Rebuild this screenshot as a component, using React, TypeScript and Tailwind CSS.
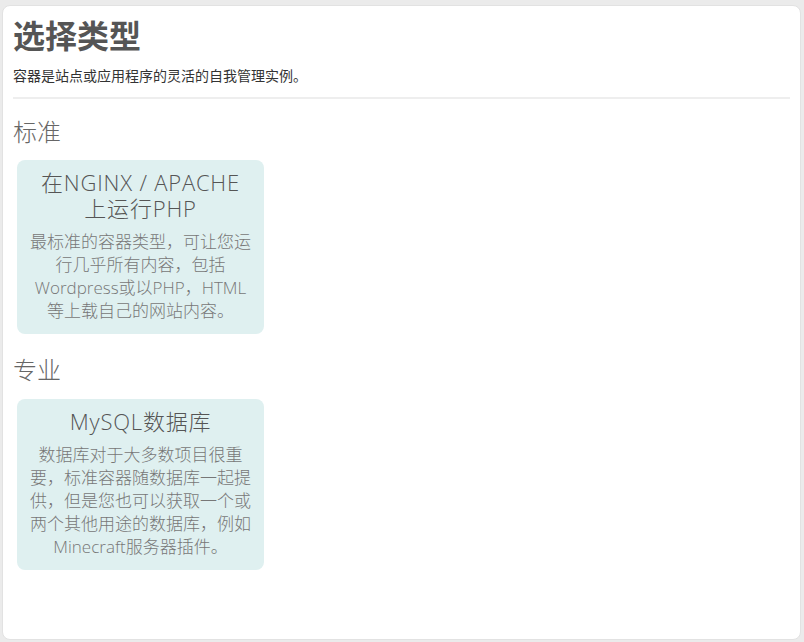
const cards = {
  standard: {
    title: ["在NGINX / APACHE", "上运行PHP"],
    desc: ["最标准的容器类型，可让您运", "行几乎所有内容，包括", "Wordpress或以PHP，HTML", "等上载自己的网站内容。"],
  },
  pro: {
    title: ["MySQL数据库"],
    desc: [
      "数据库对于大多数项目很重",
      "要，标准容器随数据库一起提",
      "供，但是您也可以获取一个或",
      "两个其他用途的数据库，例如",
      "Minecraft服务器插件。",
    ],
  },
};

function TypeCard({ title, desc }: { title: string[]; desc: string[] }) {
  return (
    <div className="w-[247px] ml-[4px] rounded-lg bg-[#dff0f0] px-1 pt-[9px] pb-[12px] text-center cursor-pointer">
      <div className="text-[22px] leading-[26px] font-light tracking-[0.8px] text-[#555] mb-[9px]">
        {title.map((t) => (
          <div key={t} className="whitespace-nowrap">{t}</div>
        ))}
      </div>
      <div className="text-[17px] leading-[23px] font-light text-[#777]">
        {desc.map((d) => (
          <div key={d} className="whitespace-nowrap">{d}</div>
        ))}
      </div>
    </div>
  );
}

export default function App() {
  return (
    <div
      className="min-h-[642px] bg-[#ebebeb] pt-[5px] pl-[2px] pr-[3px] pb-[2px]"
      style={{ fontFamily: '"Open Sans", "Noto Sans CJK SC", sans-serif' }}
    >
      <div className="h-[635px] bg-white rounded-lg border border-[#e2e2e2] px-[10px] pt-[10px]">
        <h1 className="text-[32px] leading-[40px] font-bold text-[#555]">选择类型</h1>
        <p className="mt-[10px] text-[14px] leading-[20px] text-[#333]">
          容器是站点或应用程序的灵活的自我管理实例。
        </p>
        <hr className="mt-[11px] border-t-2 border-[#eeeeee]" />

        <h2 className="mt-[17px] text-[24px] leading-[32px] font-light text-[#666]">标准</h2>
        <div className="mt-3">
          <TypeCard {...cards.standard} />
        </div>

        <h2 className="mt-[20px] text-[24px] leading-[32px] font-light text-[#666]">专业</h2>
        <div className="mt-[13px]">
          <TypeCard {...cards.pro} />
        </div>
      </div>
    </div>
  );
}
